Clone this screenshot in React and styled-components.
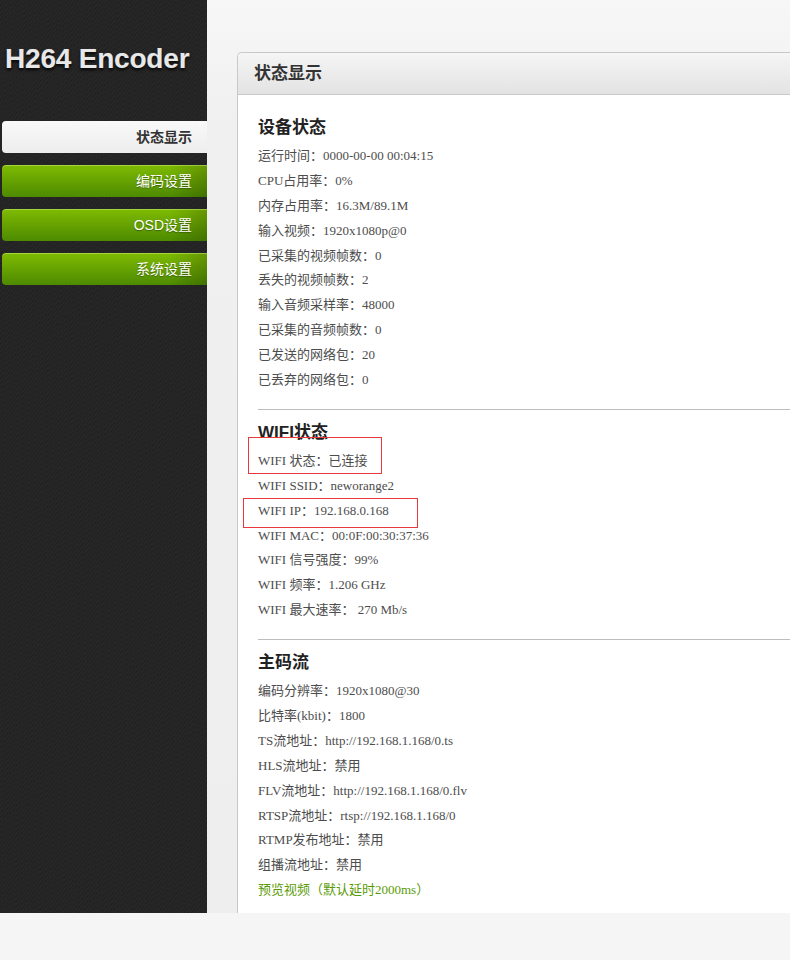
import React from 'react';
import styled, { createGlobalStyle } from 'styled-components';

const GlobalStyle = createGlobalStyle`
    body {
        margin: 0;
        background: #f5f5f5;
        font-family: "Liberation Serif", "Noto Sans CJK SC", serif;
    }
`;

const Page = styled.div`
    display: flex;
    width: 100%;
    overflow: hidden;
`;

const Sidebar = styled.div`
    width: 207px;
    flex-shrink: 0;
    padding-top: 42px;
    box-sizing: border-box;
    background-color: #242424;
    background-image:
        repeating-linear-gradient(37deg, rgba(255, 255, 255, 0.018) 0 1px, transparent 1px 2px),
        repeating-linear-gradient(-53deg, rgba(0, 0, 0, 0.12) 0 1px, transparent 1px 3px);
`;

const Logo = styled.div`
    padding-left: 5px;
    height: 34px;
    line-height: 34px;
    font-family: "Liberation Sans", Arial, sans-serif;
    font-size: 28px;
    font-weight: bold;
    letter-spacing: -0.2px;
    color: #e8e8e8;
    text-shadow: 0 2px 3px rgba(0, 0, 0, 0.9), 0 0 1px rgba(255, 255, 255, 0.3);
    white-space: nowrap;
`;

const Nav = styled.nav`
    display: flex;
    flex-direction: column;
    gap: 12px;
    margin-top: 45px;
    padding-left: 2px;
`;

const NavButton = styled.div`
    height: 32px;
    line-height: 32px;
    padding-right: 15px;
    text-align: right;
    border-radius: 4px 0 0 4px;
    font-family: "Liberation Sans", "Noto Sans CJK SC", sans-serif;
    font-size: 14px;
    font-weight: ${({ active }) => (active ? 'bold' : 'normal')};
    color: ${({ active }) => (active ? '#333' : '#fff')};
    text-shadow: ${({ active }) => (active ? 'none' : '0 1px 1px rgba(0, 0, 0, 0.35)')};
    background: ${({ active }) =>
        active
            ? 'linear-gradient(#f9f9f9, #ededed)'
            : 'linear-gradient(to right, transparent 82%, rgba(0, 0, 0, 0.18)), linear-gradient(#7fbb02, #4d8a00)'};
    box-shadow: ${({ active }) => (active ? 'none' : 'inset 0 1px 0 rgba(200, 240, 120, 0.5)')};
`;

const Main = styled.div`
    flex: 1;
    padding: 52px 0 0 30px;
    background: linear-gradient(#f7f7f7, #f0f0f0 120px, #eeeeee);
`;

const Panel = styled.div`
    background: #fff;
    border: 1px solid #c8c8c8;
    border-right: none;
    border-bottom: none;
    border-radius: 5px 0 0 0;
`;

const PanelHeader = styled.div`
    height: 41px;
    line-height: 41px;
    padding-left: 16px;
    border-bottom: 1px solid #c9c9c9;
    border-radius: 5px 0 0 0;
    background: linear-gradient(#f5f5f5, #e3e3e3);
    font-family: "Liberation Sans", "Noto Sans CJK SC", sans-serif;
    font-size: 17px;
    font-weight: bold;
    color: #333;
`;

const PanelBody = styled.div`
    padding: 21px 0 10px 20px;
`;

const Section = styled.div`
    border-top: ${({ first }) => (first ? 'none' : '1px solid #bdbdbd')};
    padding-top: ${({ first }) => (first ? '0' : '11px')};
    margin-bottom: ${({ last }) => (last ? '0' : '16px')};
`;

const SectionTitle = styled.h3`
    margin: 0 0 4px;
    height: 24px;
    line-height: 24px;
    font-family: "Liberation Sans", "Noto Sans CJK SC", sans-serif;
    font-size: 17px;
    font-weight: bold;
    color: #222;
`;

const Row = styled.div`
    position: relative;
    height: 24.9px;
    line-height: 24.9px;
    font-size: 13px;
    color: ${({ green }) => (green ? '#5a9b07' : '#4d4d4d')};
    white-space: nowrap;
`;

const Mark = styled.span`
    position: absolute;
    top: ${({ top }) => top}px;
    left: ${({ left }) => left}px;
    width: ${({ w }) => w}px;
    height: ${({ h }) => h}px;
    border: 1px solid #e8383c;
    box-sizing: border-box;
    pointer-events: none;
`;

const sections = [
    {
        title: '设备状态',
        rows: [
            '运行时间：0000-00-00 00:04:15',
            'CPU占用率：0%',
            '内存占用率：16.3M/89.1M',
            '输入视频：1920x1080p@0',
            '已采集的视频帧数：0',
            '丢失的视频帧数：2',
            '输入音频采样率：48000',
            '已采集的音频帧数：0',
            '已发送的网络包：20',
            '已丢弃的网络包：0',
        ],
    },
    {
        title: 'WIFI状态',
        rows: [
            { text: 'WIFI 状态：已连接', mark: { top: -12, left: -10, w: 134, h: 37 } },
            'WIFI SSID：neworange2',
            { text: 'WIFI IP：192.168.0.168', mark: { top: -1, left: -15, w: 175, h: 30 } },
            'WIFI MAC：00:0F:00:30:37:36',
            'WIFI 信号强度：99%',
            'WIFI 频率：1.206 GHz',
            'WIFI 最大速率： 270 Mb/s',
        ],
    },
    {
        title: '主码流',
        rows: [
            '编码分辨率：1920x1080@30',
            '比特率(kbit)：1800',
            'TS流地址：http://192.168.1.168/0.ts',
            'HLS流地址：禁用',
            'FLV流地址：http://192.168.1.168/0.flv',
            'RTSP流地址：rtsp://192.168.1.168/0',
            'RTMP发布地址：禁用',
            '组播流地址：禁用',
            { text: '预览视频（默认延时2000ms）', green: true },
        ],
    },
];

const navItems = ['状态显示', '编码设置', 'OSD设置', '系统设置'];

export default function App() {
    return (
        <>
            <GlobalStyle />
            <Page>
                <Sidebar>
                    <Logo>H264 Encoder</Logo>
                    <Nav>
                        {navItems.map((item, i) => (
                            <NavButton key={item} active={i === 0}>
                                {item}
                            </NavButton>
                        ))}
                    </Nav>
                </Sidebar>
                <Main>
                    <Panel>
                        <PanelHeader>状态显示</PanelHeader>
                        <PanelBody>
                            {sections.map((section, i) => (
                                <Section key={section.title} first={i === 0} last={i === sections.length - 1}>
                                    <SectionTitle>{section.title}</SectionTitle>
                                    {section.rows.map((row) => {
                                        const item = typeof row === 'string' ? { text: row } : row;
                                        return (
                                            <Row key={item.text} green={item.green}>
                                                {item.text}
                                                {item.mark && <Mark {...item.mark} />}
                                            </Row>
                                        );
                                    })}
                                </Section>
                            ))}
                        </PanelBody>
                    </Panel>
                </Main>
            </Page>
        </>
    );
}
